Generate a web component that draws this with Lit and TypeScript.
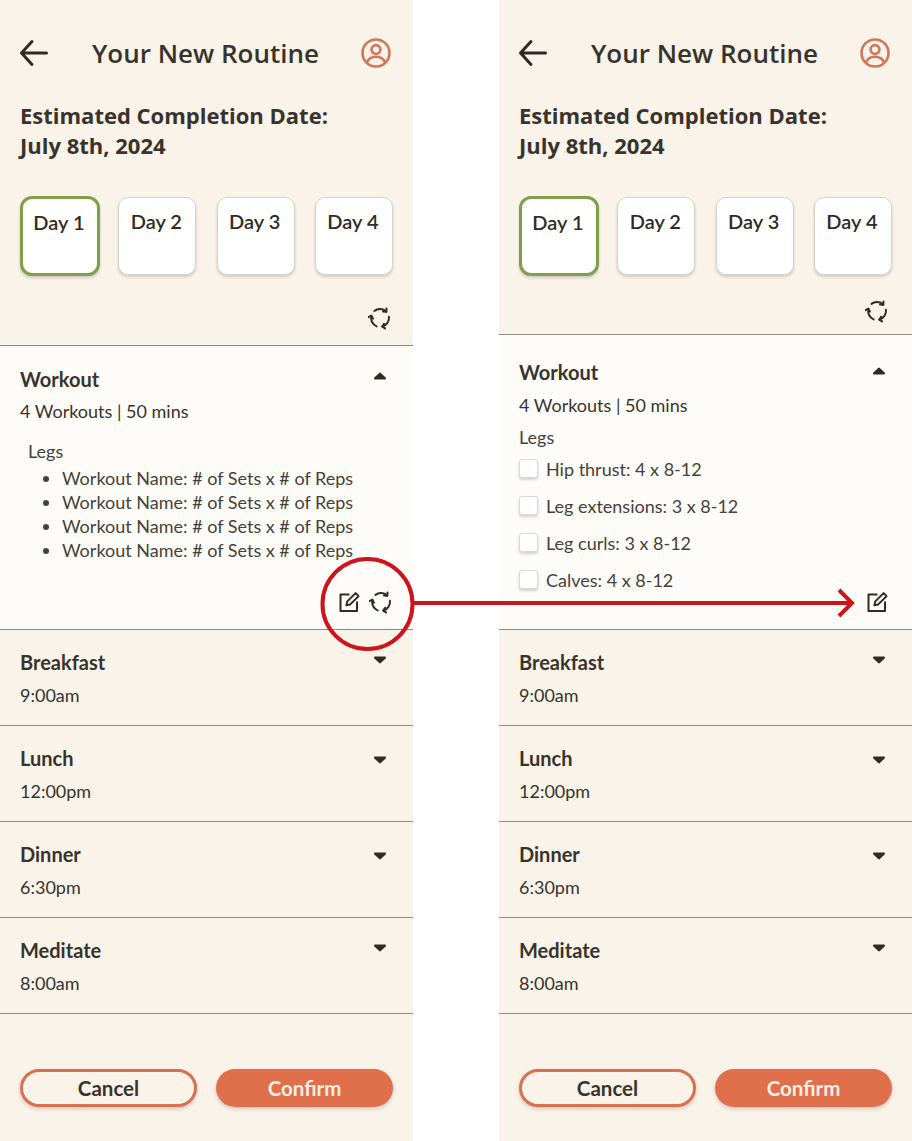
import { LitElement, css, html, svg } from "lit";
import { customElement, property } from "lit/decorators.js";

const meals = [
  { name: "Breakfast", time: "9:00am", nudge: 1 },
  { name: "Lunch", time: "12:00pm", nudge: 5 },
  { name: "Dinner", time: "6:30pm", nudge: 5 },
  { name: "Meditate", time: "8:00am", nudge: 1 },
];
const checklist = ["Hip thrust: 4 x 8-12", "Leg extensions: 3 x 8-12", "Leg curls: 3 x 8-12", "Calves: 4 x 8-12"];
const days = ["Day 1", "Day 2", "Day 3", "Day 4"];

const refreshIcon = html`<svg class="icon" viewBox="0 0 24 24" fill="none" stroke="#2f2b26" stroke-width="2" stroke-linecap="round" stroke-linejoin="round">
  ${[0, 120, 240].map(
    (a) => svg`<g transform="rotate(${a} 12 12)">
      <path d="M6.46 4.9A9 9 0 0 1 18.3 5.7" />
      <path d="M18.5 2.4 18.3 5.7 15 5.6" />
    </g>`,
  )}
</svg>`;

const editIcon = html`<svg class="icon" viewBox="0 0 24 24" fill="none" stroke="#2f2b26" stroke-width="2" stroke-linejoin="round">
  <path d="M12.5 4.5H3.5V21H20V11.5" />
  <path d="M9.5 15.2 10.3 11.4 18.6 3.1 21.6 6.1 13.3 14.4Z" />
</svg>`;

@customElement("routine-panel")
export class RoutinePanel extends LitElement {
  @property({ type: Boolean }) checklist = false;

  static styles = css`
    :host {
      display: block;
      width: 413px;
      background: #faf3ea;
      color: #2f2b26;
      font-family: "Lato", sans-serif;
    }
    .top {
      height: 345px;
      box-sizing: border-box;
      padding: 36px 20px 0 20px;
      display: flex;
      flex-direction: column;
    }
    .compact .top {
      height: 334px;
    }
    .head {
      display: flex;
      align-items: center;
      justify-content: space-between;
      height: 34px;
    }
    .back {
      width: 30px;
      height: 30px;
      margin-left: -1px;
    }
    .title {
      font-family: "Open Sans", sans-serif;
      font-size: 26px;
      font-weight: 600;
      color: #38332d;
      margin-left: 2px;
    }
    .user {
      width: 32px;
      height: 32px;
      margin-right: 1px;
    }
    .estimate {
      margin: 0;
      padding-top: 30px;
      font-family: "Open Sans", sans-serif;
      font-size: 22px;
      line-height: 30px;
      font-weight: 700;
      color: #38332d;
    }
    .days {
      display: flex;
      justify-content: space-between;
      align-items: center;
      margin-top: 36px;
    }
    .day {
      width: 78px;
      height: 78px;
      box-sizing: border-box;
      padding: 11px 2px 0 0;
      text-align: center;
      font-size: 20px;
      font-weight: 600;
      background: #fff;
      border: 1px solid #d6d2cc;
      border-radius: 10px;
      box-shadow: 0 2px 3px rgba(60, 40, 20, 0.2);
    }
    .day.on {
      width: 80px;
      height: 80px;
      margin-right: -2px;
      border: 3px solid #7f9f48;
      border-radius: 12px;
    }
    .swap {
      display: flex;
      justify-content: flex-end;
      margin-top: 30px;
      padding-right: 1px;
    }
    .compact .swap {
      margin-top: 23px;
      padding-right: 3px;
    }
    .icon {
      width: 24px;
      height: 24px;
      display: block;
    }
    .block {
      border-top: 1px solid #8e8a84;
    }
    .workout {
      background: #fefcf9;
      height: 284px;
      box-sizing: border-box;
      padding: 20px 20px 0 20px;
      position: relative;
    }
    .compact .workout {
      height: 295px;
      padding-top: 24px;
    }
    .row {
      display: flex;
      justify-content: space-between;
      align-items: flex-start;
    }
    .name {
      font-size: 20px;
      line-height: 26px;
      font-weight: 700;
      color: #38332d;
    }
    .sub {
      font-size: 18px;
      line-height: 24px;
      margin-top: 8px;
      color: #38332d;
    }
    .workout .sub {
      margin-top: 7px;
    }
    .compact .workout .sub {
      margin-top: 8px;
    }
    .caret {
      width: 14px;
      height: 10px;
      margin-right: 6px;
      flex: none;
    }
    .legs {
      font-size: 18px;
      line-height: 24px;
      margin: 16px 0 0 8px;
      color: #45423d;
    }
    .compact .legs {
      margin: 8px 0 0 0;
    }
    ul {
      margin: 3px 0 0 0;
      padding: 0 0 0 42px;
      font-size: 18px;
      line-height: 24px;
      color: #45423d;
    }
    .checks {
      display: flex;
      flex-direction: column;
      gap: 13px;
      margin-top: 8px;
    }
    .check {
      display: flex;
      align-items: center;
      gap: 8px;
      font-size: 18px;
      line-height: 24px;
      color: #45423d;
    }
    .box {
      width: 19px;
      height: 19px;
      box-sizing: border-box;
      background: #fff;
      border: 1px solid #dcd8d2;
      border-radius: 3px;
      box-shadow: 0 2px 3px rgba(60, 40, 20, 0.2);
      margin-top: -2px;
    }
    .tools {
      position: absolute;
      right: 20px;
      top: 244px;
      display: flex;
      gap: 8px;
    }
    .compact .tools {
      right: 23px;
      top: 255px;
    }
    .meal {
      height: 96px;
      box-sizing: border-box;
      padding: 19px 20px 0 20px;
    }
    .foot {
      border-top: 1px solid #8e8a84;
      height: 128px;
      box-sizing: border-box;
      padding: 55px 20px 0 20px;
      display: flex;
      justify-content: space-between;
    }
    .btn {
      width: 177px;
      height: 38px;
      box-sizing: border-box;
      border-radius: 19px;
      font-family: "Lato", sans-serif;
      font-size: 20.5px;
      font-weight: 700;
      padding: 0;
      box-shadow: 0 2px 4px rgba(60, 40, 20, 0.2);
    }
    .cancel {
      background: #faf3ea;
      border: 3px solid #d9704f;
      color: #38332d;
    }
    .confirm {
      background: #e0704c;
      border: none;
      color: #fbeee2;
    }
  `;

  private caret(up: boolean, nudge = 0) {
    const d = up ? "M7 2.8 11.8 7.4H2.2Z" : "M2.2 2.6H11.8L7 7.2Z";
    return html`<svg class="caret" style="margin-top:${5 + nudge}px" viewBox="0 0 14 10" fill="#2f2b26" stroke="#2f2b26" stroke-width="2.4" stroke-linejoin="round"><path d=${d} /></svg>`;
  }

  render() {
    return html`<div class=${this.checklist ? "compact" : ""}>
      <section class="top">
        <div class="head">
          <svg class="back" viewBox="0 0 30 30" fill="none" stroke="#2f2b26" stroke-width="3" stroke-linecap="round" stroke-linejoin="round">
            <path d="M2.5 15H27.5M13 3.5 2.5 15 13 26.5" />
          </svg>
          <span class="title">Your New Routine</span>
          <svg class="user" viewBox="0 0 32 32" fill="none" stroke="#d2765a" stroke-width="2.6">
            <circle cx="16" cy="16" r="13.5" />
            <circle cx="16" cy="12.5" r="4.4" />
            <path d="M6.8 25.5C9 20.8 12 19.8 16 19.8S23 20.8 25.2 25.5" />
          </svg>
        </div>
        <p class="estimate">Estimated Completion Date:<br />July 8th, 2024</p>
        <div class="days">
          ${days.map((d, i) => html`<div class="day ${i === 0 ? "on" : ""}">${d}</div>`)}
        </div>
        <div class="swap">${refreshIcon}</div>
      </section>
      <section class="block workout">
        <div class="row"><span class="name">Workout</span>${this.caret(true, this.checklist ? 2 : 0)}</div>
        <div class="sub">4 Workouts | 50 mins</div>
        <div class="legs">Legs</div>
        ${this.checklist
          ? html`<div class="checks">
              ${checklist.map((c) => html`<div class="check"><span class="box"></span>${c}</div>`)}
            </div>`
          : html`<ul>
              ${[1, 2, 3, 4].map(() => html`<li>Workout Name: # of Sets x # of Reps</li>`)}
            </ul>`}
        <div class="tools">${editIcon}${this.checklist ? "" : refreshIcon}</div>
      </section>
      ${meals.map(
        (m) => html`<section class="block meal">
          <div class="row"><span class="name">${m.name}</span>${this.caret(false, m.nudge)}</div>
          <div class="sub">${m.time}</div>
        </section>`,
      )}
      <div class="foot">
        <button class="btn cancel">Cancel</button>
        <button class="btn confirm">Confirm</button>
      </div>
    </div>`;
  }
}

@customElement("app-root")
export class AppRoot extends LitElement {
  static styles = css`
    :host {
      display: block;
      background: #fff;
    }
    .screens {
      position: relative;
      width: 912px;
      height: 1141px;
      overflow: hidden;
      display: flex;
      justify-content: space-between;
    }
    .mark {
      position: absolute;
      left: 0;
      top: 0;
      pointer-events: none;
    }
  `;

  render() {
    return html`<div class="screens">
      <routine-panel></routine-panel>
      <routine-panel checklist></routine-panel>
      <svg class="mark" width="912" height="1141" fill="none" stroke="#cc141b" stroke-width="4">
        <circle cx="367.5" cy="604" r="45" />
        <path d="M413 603H852M839 590 852 603 839 616" />
      </svg>
    </div>`;
  }
}
